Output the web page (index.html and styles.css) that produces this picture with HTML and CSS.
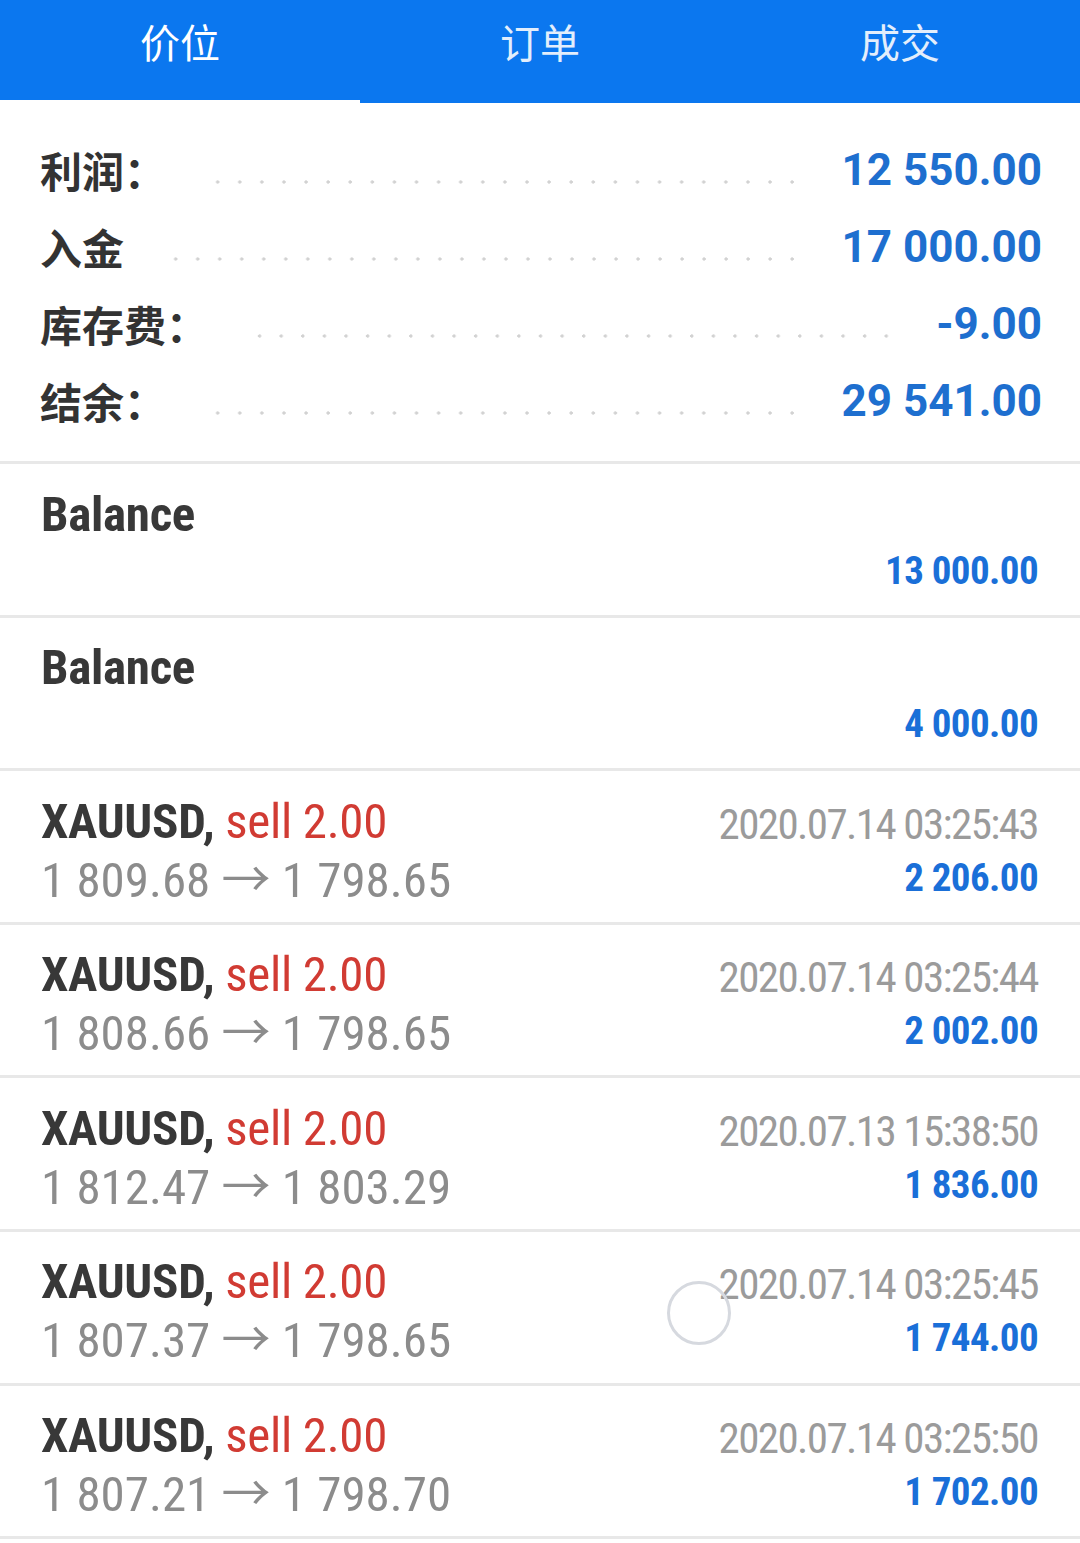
FILE: index.html
```html
<!DOCTYPE html>
<html lang="zh-CN">
<head>
    <meta charset="UTF-8">
    <meta name="viewport" content="width=device-width, initial-scale=1.0">
    <title>历史</title>
    <link rel="stylesheet" href="styles.css">
</head>
<body>
    <!-- Tab bar -->
    <div class="tabs">
        <div class="tab active">价位</div>
        <div class="tab">订单</div>
        <div class="tab">成交</div>
    </div>

    <!-- Summary -->
    <div class="summary">
        <div class="sum-row">
            <span class="sum-label">利润：</span>
            <span class="leader"></span>
            <span class="sum-value">12 550.00</span>
        </div>
        <div class="sum-row">
            <span class="sum-label">入金</span>
            <span class="leader"></span>
            <span class="sum-value">17 000.00</span>
        </div>
        <div class="sum-row">
            <span class="sum-label">库存费：</span>
            <span class="leader"></span>
            <span class="sum-value">-9.00</span>
        </div>
        <div class="sum-row">
            <span class="sum-label">结余：</span>
            <span class="leader"></span>
            <span class="sum-value">29 541.00</span>
        </div>
    </div>

    <!-- Deals -->
    <div class="list">
        <div class="item">
            <div class="title">Balance</div>
            <div class="time"></div>
            <div></div>
            <div class="profit">13 000.00</div>
        </div>
        <div class="item">
            <div class="title">Balance</div>
            <div class="time"></div>
            <div></div>
            <div class="profit">4 000.00</div>
        </div>
        <div class="item">
            <div class="title">XAUUSD, <span class="sell">sell 2.00</span></div>
            <div class="time">2020.07.14 03:25:43</div>
            <div class="prices">1 809.68 → 1 798.65</div>
            <div class="profit">2 206.00</div>
        </div>
        <div class="item">
            <div class="title">XAUUSD, <span class="sell">sell 2.00</span></div>
            <div class="time">2020.07.14 03:25:44</div>
            <div class="prices">1 808.66 → 1 798.65</div>
            <div class="profit">2 002.00</div>
        </div>
        <div class="item">
            <div class="title">XAUUSD, <span class="sell">sell 2.00</span></div>
            <div class="time">2020.07.13 15:38:50</div>
            <div class="prices">1 812.47 → 1 803.29</div>
            <div class="profit">1 836.00</div>
        </div>
        <div class="item">
            <div class="title">XAUUSD, <span class="sell">sell 2.00</span></div>
            <div class="time">2020.07.14 03:25:45</div>
            <div class="prices">1 807.37 → 1 798.65</div>
            <div class="profit">1 744.00</div>
            <span class="touch"></span>
        </div>
        <div class="item">
            <div class="title">XAUUSD, <span class="sell">sell 2.00</span></div>
            <div class="time">2020.07.14 03:25:50</div>
            <div class="prices">1 807.21 → 1 798.70</div>
            <div class="profit">1 702.00</div>
        </div>
    </div>
</body>
</html>
```

FILE: styles.css
```css
/* General */
body {
    margin: 0;
    background: #fff;
    font-family: Roboto, "Noto Sans CJK SC", sans-serif;
    color: #3a3a3a;
}

/* Tab bar */
.tabs {
    display: flex;
    background: #0b77ef;
    height: 103px;
}

.tab {
    flex: 1;
    text-align: center;
    font-family: "Noto Sans CJK SC", sans-serif;
    font-size: 40px;
    line-height: 82px;
    color: #e3eefc;
    box-sizing: border-box;
}

.tab.active {
    color: #fff;
    border-bottom: 4px solid #fff;
    margin-bottom: -1px;
    height: 104px;
}

/* Summary */
.summary {
    padding: 28px 38px 22px 40px;
    border-bottom: 3px solid #e8e8e8;
}

.sum-row {
    display: flex;
    align-items: center;
    height: 77px;
}

.sum-label {
    font-family: "Noto Sans CJK SC", sans-serif;
    font-weight: bold;
    font-size: 42px;
    color: #333;
}

.leader {
    flex: 1;
    align-self: stretch;
    margin: 0 39px 0 41px;
    background-image: radial-gradient(circle, #d2d2d2 1.4px, transparent 1.9px);
    background-size: 21.3px 6px;
    background-repeat: space no-repeat;
    background-position: 0 48px;
}

.sum-value {
    font-weight: bold;
    font-size: 44px;
    color: #1e6fcf;
}

/* Deal rows */
.item {
    position: relative;
    display: grid;
    grid-template-columns: 1fr auto;
    grid-auto-rows: 54px;
    align-items: center;
    height: 153.6px;
    box-sizing: border-box;
    padding: 23px 42px 0 41px;
    border-bottom: 3px solid #e8e8e8;
}

.title {
    font-weight: bold;
    font-size: 49px;
    font-stretch: condensed;
    letter-spacing: -0.3px;
    color: #383838;
}

.sell {
    font-weight: normal;
    color: #d13b33;
}

.prices {
    font-size: 49px;
    font-stretch: condensed;
    color: #8c8c8c;
}

.time, .profit {
    text-align: right;
    padding-top: 5px;
}

.time {
    font-size: 43px;
    font-stretch: condensed;
    letter-spacing: -1.6px;
    color: #9b9b9b;
}

.profit {
    font-weight: bold;
    font-size: 39px;
    font-stretch: condensed;
    letter-spacing: -0.6px;
    color: #1a6fd8;
}

/* touch feedback ring */
.touch {
    position: absolute;
    left: 667px;
    top: 49px;
    width: 58px;
    height: 58px;
    border: 3px solid #d6d9df;
    border-radius: 50%;
}
```
